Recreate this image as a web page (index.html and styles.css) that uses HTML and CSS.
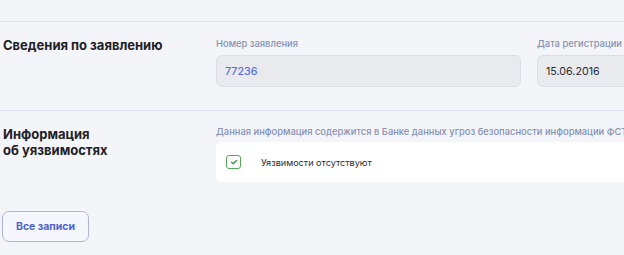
FILE: index.html
```html
<!DOCTYPE html>
<html lang="ru">
  <head>
    <meta charset="UTF-8" />
    <meta name="viewport" content="width=device-width, initial-scale=1.0" />
    <title>Сведения</title>
    <link rel="stylesheet" href="styles.css">
  </head>
  <body>
    <main class="page">
      <section class="block">
        <h2 class="block-title">Сведения по заявлению</h2>
        <div class="fields">
          <div class="field field-wide">
            <label class="field-label">Номер заявления</label>
            <div class="field-box field-link">77236</div>
          </div>
          <div class="field field-date">
            <label class="field-label">Дата регистрации</label>
            <div class="field-box">15.06.2016</div>
          </div>
        </div>
      </section>
      <section class="block block-vuln">
        <h2 class="block-title">Информация<br />об уязвимостях</h2>
        <div class="vuln">
          <p class="field-label">Данная информация содержится в Банке данных угроз безопасности информации ФСТЭК России</p>
          <div class="vuln-card">
            <span class="check">
              <svg width="8" height="8" viewBox="0 0 8 8">
                <path d="M1.5 4.2 L3.3 5.8 L6.5 2.4" fill="none" stroke="#3e9b46" stroke-width="1.4" stroke-linecap="round" stroke-linejoin="round" />
              </svg>
            </span>
            <span class="vuln-text">Уязвимости отсутствуют</span>
          </div>
        </div>
      </section>
      <div class="actions">
        <button class="btn-outline">Все записи</button>
      </div>
    </main>
  </body>
</html>
```

FILE: styles.css
```css
* {
  box-sizing: border-box;
  margin: 0;
  padding: 0;
  font-family: Inter, "Noto Sans", sans-serif;
}
body {
  background-color: #f4f5f9;
  color: #222429;
  overflow: hidden;
}
.page {
  padding-top: 21px;
  width: 760px;
}
.block {
  display: grid;
  grid-template-columns: 216px 1fr;
  border-top: 1px solid #dfe4f3;
  padding: 15px 0 23px 0;
}
.block-vuln {
  padding-top: 15px;
  padding-bottom: 29px;
}
.block-title {
  font-size: 13px;
  line-height: 16px;
  font-weight: 700;
  padding-left: 3px;
  color: #1f2126;
}
.fields {
  display: flex;
  gap: 16px;
  padding-top: 1px;
}
.field-wide {
  width: 305px;
}
.field-date {
  width: 180px;
}
.field-label {
  display: block;
  font-size: 9.4px;
  line-height: 12px;
  font-weight: 500;
  color: #8691b2;
  margin-bottom: 5px;
  white-space: nowrap;
}
.field-box {
  height: 32px;
  border: 1px solid #dcdee5;
  border-radius: 6px;
  background-color: #e9eaee;
  padding: 0 8px;
  display: flex;
  align-items: center;
  font-size: 10.7px;
  color: #2a2c31;
}
.field-link {
  color: #5a6fd8;
  font-weight: 500;
}
.vuln .field-label {
  margin-bottom: 4px;
}
.vuln-card {
  height: 40px;
  background-color: #fff;
  border-radius: 6px;
  display: flex;
  align-items: center;
  padding-left: 10px;
}
.check {
  width: 15px;
  height: 14px;
  border: 1px solid #53a85a;
  border-radius: 3px;
  display: flex;
  align-items: center;
  justify-content: center;
  margin-right: 20px;
}
.vuln-text {
  font-size: 9.1px;
  color: #2a2c31;
}
.actions {
  padding-left: 2px;
}
.btn-outline {
  width: 87px;
  height: 31px;
  border: 1.5px solid #aab5e6;
  border-radius: 7px;
  background-color: #f6f7fc;
  color: #4b63cf;
  font-size: 10.5px;
  font-weight: 700;
}
```
